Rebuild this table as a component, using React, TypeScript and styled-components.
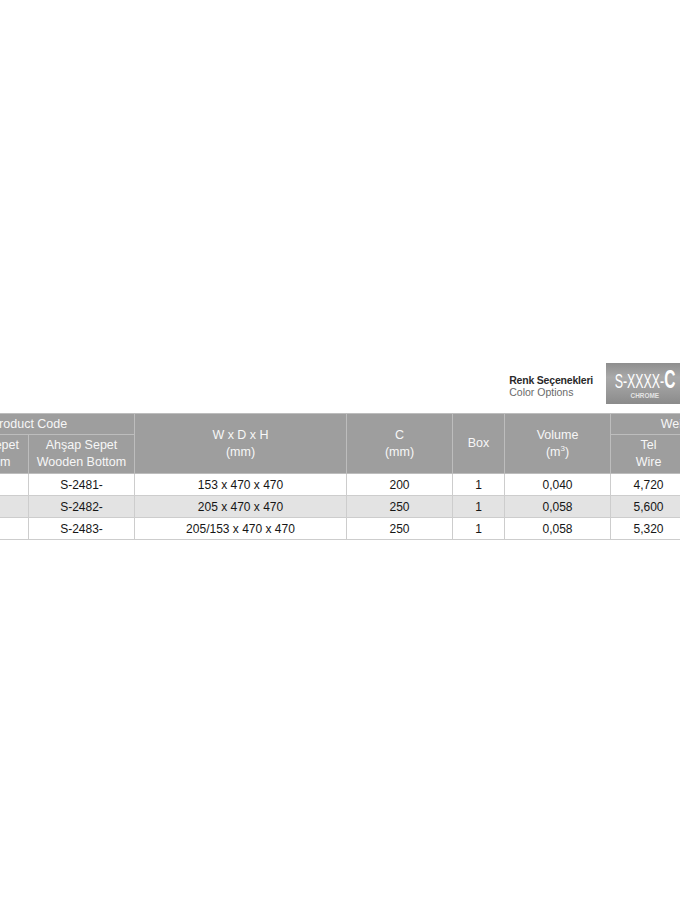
import React from 'react';
import styled, { createGlobalStyle } from 'styled-components';

const GlobalStyle = createGlobalStyle`
  body {
    margin: 0;
    background: #ffffff;
    font-family: 'Liberation Sans', Arial, sans-serif;
  }
`;

interface Row {
  wire: string;
  wooden: string;
  size: string;
  c: string;
  box: string;
  volume: string;
  weightWire: string;
  weightWooden: string;
}

const rows: Row[] = [
  { wire: 'S-2471-', wooden: 'S-2481-', size: '153 x 470 x 470', c: '200', box: '1', volume: '0,040', weightWire: '4,720', weightWooden: '5,180' },
  { wire: 'S-2472-', wooden: 'S-2482-', size: '205 x 470 x 470', c: '250', box: '1', volume: '0,058', weightWire: '5,600', weightWooden: '6,240' },
  { wire: 'S-2473-', wooden: 'S-2483-', size: '205/153 x 470 x 470', c: '250', box: '1', volume: '0,058', weightWire: '5,320', weightWooden: '5,900' },
];

const colWidths = [105, 106, 212, 106, 52, 106, 76, 88];

function App() {
  return (
    <Page>
      <GlobalStyle />
      <Legend>
        <LegendText>
          <LegendTitle>Renk Seçenekleri</LegendTitle>
          <LegendSub>Color Options</LegendSub>
        </LegendText>
        <Chip>
          <ChipCode>
            S-XXXX-<ChipLetter>C</ChipLetter>
          </ChipCode>
          <ChipName>CHROME</ChipName>
        </Chip>
      </Legend>

      <Table>
        <colgroup>
          {colWidths.map((w, i) => (
            <col key={i} style={{ width: w }} />
          ))}
        </colgroup>
        <thead>
          <HeadRow $height={21}>
            <Th colSpan={2}>Product Code</Th>
            <Th rowSpan={2}>
              W x D x H
              <br />
              (mm)
            </Th>
            <Th rowSpan={2}>
              C
              <br />
              (mm)
            </Th>
            <Th rowSpan={2}>Box</Th>
            <Th rowSpan={2}>
              Volume
              <br />
              (m<Sup>3</Sup>)
            </Th>
            <Th colSpan={2}>Weight (kg)</Th>
          </HeadRow>
          <HeadRow $height={39}>
            <Th>
              Metal Tel Sepet
              <br />
              Wire Bottom
            </Th>
            <Th>
              Ahşap Sepet
              <br />
              Wooden Bottom
            </Th>
            <Th>
              Tel
              <br />
              Wire
            </Th>
            <Th>
              Ahşap
              <br />
              Wooden
            </Th>
          </HeadRow>
        </thead>
        <tbody>
          {rows.map((r, i) => (
            <DataRow key={r.wooden} $shaded={i % 2 === 1}>
              <Td>{r.wire}</Td>
              <Td>{r.wooden}</Td>
              <Td>{r.size}</Td>
              <Td>{r.c}</Td>
              <Td>{r.box}</Td>
              <Td>{r.volume}</Td>
              <Td>{r.weightWire}</Td>
              <Td>{r.weightWooden}</Td>
            </DataRow>
          ))}
        </tbody>
      </Table>
    </Page>
  );
}

export default App;

const Page = styled.div`
  width: 680px;
  height: 920px;
  overflow: hidden;
  background: #ffffff;
  padding-top: 363px;
  box-sizing: border-box;
  display: flex;
  flex-direction: column;
`;

const Legend = styled.div`
  display: flex;
  justify-content: flex-end;
  align-items: center;
  gap: 13px;
`;

const LegendText = styled.div`
  display: flex;
  flex-direction: column;
  font-size: 10.5px;
  line-height: 12px;
  padding-top: 4px;
`;

const LegendTitle = styled.span`
  color: #2a2a2a;
  font-weight: bold;
  letter-spacing: -0.2px;
`;

const LegendSub = styled.span`
  color: #6a6a6a;
`;

const Chip = styled.div`
  width: 74px;
  height: 41px;
  box-sizing: border-box;
  background: linear-gradient(180deg, #8e8e8e 0%, #a9a9a9 35%, #9f9f9f 60%, #8b8b8b 100%);
  display: flex;
  flex-direction: column;
  align-items: center;
  justify-content: center;
  color: #ffffff;
  padding-left: 4px;
`;

const ChipCode = styled.span`
  display: inline-block;
  font-size: 20px;
  line-height: 20px;
  transform: scaleX(0.62);
  white-space: nowrap;
  margin-top: 2px;
`;

const ChipLetter = styled.span`
  font-size: 25px;
  font-weight: bold;
`;

const ChipName = styled.span`
  display: inline-block;
  font-size: 8px;
  line-height: 9px;
  font-weight: bold;
  color: #e4e4e4;
  transform: scaleX(0.8);
`;

const Table = styled.table`
  margin-top: 9px;
  margin-left: -77px;
  width: 851px;
  table-layout: fixed;
  border-collapse: collapse;
  font-size: 12px;
`;

const HeadRow = styled.tr<{ $height: number }>`
  height: ${(p) => p.$height}px;
`;

const Th = styled.th`
  background: #9e9e9e;
  color: #f7f7f7;
  font-weight: normal;
  font-size: 12.5px;
  line-height: 17px;
  padding: 0;
  text-align: center;
  vertical-align: middle;
  border: 1px solid #bdbdbd;
  white-space: nowrap;
  overflow: hidden;
`;

const Sup = styled.sup`
  font-size: 8px;
  line-height: 0;
`;

const DataRow = styled.tr<{ $shaded: boolean }>`
  height: 22px;
  background: ${(p) => (p.$shaded ? '#e3e3e3' : '#ffffff')};
`;

const Td = styled.td`
  padding: 0;
  text-align: center;
  vertical-align: middle;
  color: #161616;
  border: 1px solid #cdcdcd;
  white-space: nowrap;
  overflow: hidden;
`;
